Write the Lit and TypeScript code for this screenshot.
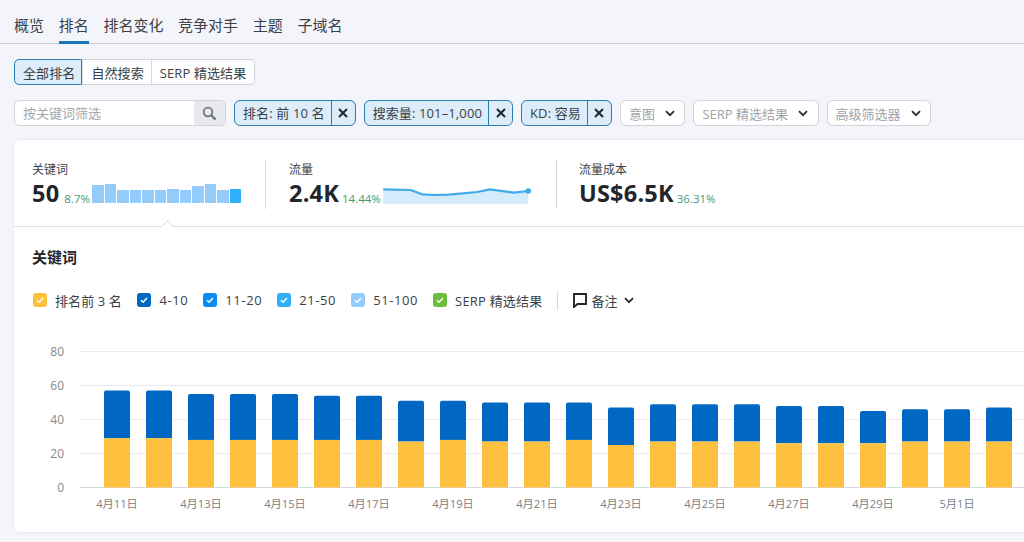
import { LitElement, html, css, svg } from "lit";
import { customElement } from "lit/decorators.js";

const tabs = ["概览", "排名", "排名变化", "竞争对手", "主题", "子域名"];
const segments = ["全部排名", "自然搜索", "SERP 精选结果"];
const chips = ["排名: 前 10 名", "搜索量: 101–1,000", "KD: 容易"];
const drops = ["意图", "SERP 精选结果", "高级筛选器"];
const legend = [
  { label: "排名前 3 名", color: "#fdc23c" },
  { label: "4-10", color: "#0068c0" },
  { label: "11-20", color: "#0a8cf0" },
  { label: "21-50", color: "#2fb1f9" },
  { label: "51-100", color: "#93ccfb" },
  { label: "SERP 精选结果", color: "#6cbd3a" },
];
const sparkBars = [17.5, 18.5, 13, 13, 13, 13, 14, 13, 17, 19, 13, 14];
const sparkLine = "M0.3 6.3 27.7 7 39.3 11.3 52.7 12 66 11.7 94 9 107 6.3 131 9.7 145.3 8";
// [total, top 3] for each day
const days: [number, number][] = [
  [57, 29], [57, 29], [55, 28], [55, 28], [55, 28], [54, 28], [54, 28], [51, 27],
  [51, 28], [50, 27], [50, 27], [50, 28], [47, 25], [49, 27], [49, 27], [49, 27],
  [48, 26], [48, 26], [45, 26], [46, 27], [46, 27], [47, 27],
];
const dateLabels = [
  "4月11日", "4月13日", "4月15日", "4月17日", "4月19日", "4月21日",
  "4月23日", "4月25日", "4月27日", "4月29日", "5月1日",
];

const Y0 = 487.5;
const UNIT = 1.7;

const chevron = html`<svg class="chev" width="10" height="7" viewBox="0 0 10 7">
  <path d="M1 1.2 5 5.2 9 1.2" fill="none" stroke="#2b3036" stroke-width="1.9" />
</svg>`;
const check = html`<svg width="14" height="14" viewBox="0 0 14 14">
  <path d="M4 7.2 6.1 9.2 10 5" fill="none" stroke="#fff" stroke-width="1.5" />
</svg>`;

@customElement("app-root")
export class AppRoot extends LitElement {
  static styles = css`
    :host {
      display: block;
      width: 1024px;
      height: 542px;
      overflow: hidden;
      background: #f4f5fa;
      color: #3a3f45;
      font-family: "Open Sans", "Noto Sans CJK SC", sans-serif;
      font-size: 13px;
    }
    .tabs {
      display: flex;
      gap: 14.7px;
      height: 43px;
      padding-left: 14px;
      border-bottom: 1px solid #ccd0d8;
    }
    .tab {
      font-size: 15px;
      line-height: 20px;
      padding-top: 15px;
      box-sizing: border-box;
      height: 44px;
      color: #3c4147;
    }
    .tab.active {
      border-bottom: 3px solid #1a76b8;
    }
    .segments {
      display: inline-flex;
      margin: 15px 0 0 14px;
      height: 26px;
      background: #fff;
      border: 1px solid #cfd3da;
      border-radius: 5px;
      box-sizing: border-box;
      vertical-align: top;
      letter-spacing: 0.1px;
    }
    .segment {
      display: flex;
      align-items: center;
      padding: 0 7px 0 8px;
      border-left: 1px solid #d8dbe1;
    }
    .segment:first-child {
      border-left: 0;
    }
    .segment:last-child {
      padding-right: 8px;
    }
    .segment.active {
      margin: -1px 0 -1px -1px;
      padding: 0 6px 0 8px;
      background: #dcecf8;
      border: 1px solid #2a7fb0;
      border-radius: 5px 0 0 5px;
    }
    .filters {
      display: flex;
      gap: 8px;
      margin: 15px 0 14px 14px;
      height: 26px;
    }
    .search {
      display: flex;
      width: 212px;
      box-sizing: border-box;
      background: #fff;
      border: 1px solid #d0d3d9;
      border-radius: 5px;
      overflow: hidden;
    }
    .search span {
      flex: 1;
      padding-left: 8px;
      line-height: 24px;
      color: #a3a7ae;
    }
    .search i {
      display: flex;
      align-items: center;
      justify-content: center;
      width: 31px;
      background: #e8e9ee;
    }
    .chip {
      display: flex;
      background: #dcecf8;
      border: 1px solid #2a7fb0;
      border-radius: 6px;
      box-sizing: border-box;
    }
    .chip span {
      padding: 0 6px 0 8px;
      line-height: 24px;
      letter-spacing: 0.12px;
      white-space: nowrap;
    }
    .chip i {
      display: flex;
      align-items: center;
      justify-content: center;
      width: 23px;
      border-left: 1px solid #2a7fb0;
    }
    .drop {
      display: flex;
      align-items: center;
      gap: 10px;
      padding: 0 9.5px 0 8px;
      background: #fff;
      border: 1px solid #d0d3d9;
      border-radius: 6px;
      box-sizing: border-box;
      color: #a0a4ab;
      white-space: nowrap;
    }
    .card {
      position: relative;
      margin-left: 14px;
      width: 1030px;
      height: 392px;
      background: #fff;
      border-radius: 6px;
      box-shadow: 0 0 2px rgba(40, 50, 70, 0.16);
    }
    .metrics {
      display: flex;
      height: 87px;
      padding: 20px 0 0 18px;
      box-sizing: border-box;
      border-bottom: 1px solid #dcdfe4;
    }
    .metric {
      height: 49px;
      box-sizing: border-box;
    }
    .metric + .metric {
      border-left: 1px solid #d5d8dd;
      padding-left: 23px;
    }
    .m1 {
      width: 233px;
    }
    .m2 {
      width: 291px;
    }
    .metric.m3 {
      padding-left: 22px;
    }
    .metric-label {
      font-size: 12px;
      line-height: 18px;
      margin-top: 1px;
      color: #3c4147;
    }
    .metric-row {
      display: flex;
      align-items: flex-end;
      height: 28px;
    }
    .metric-value {
      font-size: 23.5px;
      font-weight: 700;
      line-height: 28px;
      letter-spacing: 0.2px;
      color: #22262b;
    }
    .metric-delta {
      font-size: 11.5px;
      line-height: 16px;
      margin: 0 2.5px 0 3px;
      color: #3f9b78;
    }
    .m1 .metric-delta {
      margin-left: 5px;
    }
    .spark-bars {
      display: flex;
      align-items: flex-end;
      gap: 1.3px;
      height: 20px;
      margin-bottom: 4.5px;
    }
    .spark-bars b {
      display: block;
      width: 11.2px;
      background: #93ccfb;
    }
    .spark-bars b:last-child {
      background: #2fb1f9;
    }
    .spark-line {
      display: block;
      margin-bottom: 2px;
    }
    .notch {
      position: absolute;
      left: 149px;
      top: 82px;
      width: 8px;
      height: 8px;
      background: #fff;
      border-top: 1px solid #dcdfe4;
      border-left: 1px solid #dcdfe4;
      transform: rotate(45deg);
    }
    h2 {
      margin: 20px 0 0 18px;
      font-size: 15px;
      line-height: 20px;
      font-weight: 700;
      color: #22262b;
    }
    .legend {
      display: flex;
      align-items: center;
      height: 22px;
      margin: 22px 0 0 19px;
    }
    .legend-item {
      display: flex;
      align-items: center;
      gap: 8px;
      margin-right: 15px;
      letter-spacing: 0.2px;
      white-space: nowrap;
    }
    .legend-item:first-child {
      margin-right: 15.5px;
      letter-spacing: 0.1px;
    }
    .legend-item.num {
      letter-spacing: 0.6px;
    }
    .box {
      display: block;
      width: 14px;
      height: 14px;
      border-radius: 3px;
    }
    .note {
      display: flex;
      align-items: center;
      height: 19px;
      padding-left: 15px;
      border-left: 1px solid #d5d8dd;
    }
    .note svg:first-child {
      margin-right: 4px;
    }
    .note .chev {
      margin-left: 7px;
    }
    .chart {
      display: block;
      margin-top: 29px;
      font-family: "Open Sans", "Noto Sans CJK SC", sans-serif;
    }
  `;

  private renderChart() {
    return html`<svg class="chart" width="1010" height="190" viewBox="14 340 1010 190">
      ${[80, 60, 40, 20].map(
        (v) => svg`<line x1="80" x2="1024" y1=${Y0 - v * UNIT} y2=${Y0 - v * UNIT} stroke="#e9ebee" />`
      )}
      <line x1="80" x2="1024" y1=${Y0} y2=${Y0} stroke="#d5d8dc" />
      ${[80, 60, 40, 20, 0].map(
        (v) => svg`<text x="64" y=${Y0 - v * UNIT + 4} text-anchor="end" font-size="12" fill="#85898f">${v}</text>`
      )}
      ${days.map(([total, top], i) => {
        const x = 104 + i * 42;
        return svg`
          <path d="M${x} ${Y0 - top * UNIT}V${Y0 - total * UNIT + 2}q0-2 2-2h22q2 0 2 2V${Y0 - top * UNIT}z" fill="#0068c3" />
          <rect x=${x} y=${Y0 - top * UNIT} width="26" height=${top * UNIT} fill="#fdc13f" />`;
      })}
      ${dateLabels.map(
        (d, i) => svg`<text x=${117 + i * 84} y="508" text-anchor="middle" font-size="11.2" fill="#7d8188">${d}</text>`
      )}
    </svg>`;
  }

  render() {
    return html`
      <nav class="tabs">
        ${tabs.map((t, i) => html`<div class="tab ${i === 1 ? "active" : ""}">${t}</div>`)}
      </nav>
      <div class="segments">
        ${segments.map((s, i) => html`<div class="segment ${i === 0 ? "active" : ""}">${s}</div>`)}
      </div>
      <div class="filters">
        <div class="search">
          <span>按关键词筛选</span>
          <i>
            <svg width="15" height="15" viewBox="0 0 15 15">
              <circle cx="6" cy="6" r="4.3" fill="none" stroke="#6f747b" stroke-width="1.8" />
              <path d="M9.3 9.3 13.6 13.6" stroke="#6f747b" stroke-width="2.2" />
            </svg>
          </i>
        </div>
        ${chips.map(
          (c) => html`<div class="chip">
            <span>${c}</span>
            <i>
              <svg width="10" height="10" viewBox="0 0 10 10">
                <path d="M1 1 9 9M9 1 1 9" stroke="#22262b" stroke-width="2" />
              </svg>
            </i>
          </div>`
        )}
        ${drops.map((d) => html`<div class="drop">${d}${chevron}</div>`)}
      </div>
      <section class="card">
        <div class="metrics">
          <div class="metric m1">
            <div class="metric-label">关键词</div>
            <div class="metric-row">
              <span class="metric-value">50</span>
              <span class="metric-delta">8.7%</span>
              <div class="spark-bars">
                ${sparkBars.map((h) => html`<b style="height:${h}px"></b>`)}
              </div>
            </div>
          </div>
          <div class="metric m2">
            <div class="metric-label">流量</div>
            <div class="metric-row">
              <span class="metric-value">2.4K</span>
              <span class="metric-delta">14.44%</span>
              <svg class="spark-line" width="150" height="22" viewBox="0 0 150 22">
                <path d="${sparkLine}V20.7H0.3z" fill="#d3ecfc" />
                <path d=${sparkLine} fill="none" stroke="#3fa9ea" stroke-width="2.2" />
                <circle cx="145.3" cy="8" r="2.8" fill="#3fa9ea" />
              </svg>
            </div>
          </div>
          <div class="metric m3">
            <div class="metric-label">流量成本</div>
            <div class="metric-row">
              <span class="metric-value">US$6.5K</span>
              <span class="metric-delta">36.31%</span>
            </div>
          </div>
        </div>
        <div class="notch"></div>
        <h2>关键词</h2>
        <div class="legend">
          ${legend.map(
            (l) => html`<div class="legend-item ${/^\d/.test(l.label) ? "num" : ""}">
              <span class="box" style="background:${l.color}">${check}</span>${l.label}
            </div>`
          )}
          <div class="note">
            <svg width="14" height="15" viewBox="0 0 14 15">
              <path d="M1 1H13V11H4.5L1 14z" fill="none" stroke="#22262b" stroke-width="1.9" />
            </svg>
            备注${chevron}
          </div>
        </div>
        ${this.renderChart()}
      </section>
    `;
  }
}
